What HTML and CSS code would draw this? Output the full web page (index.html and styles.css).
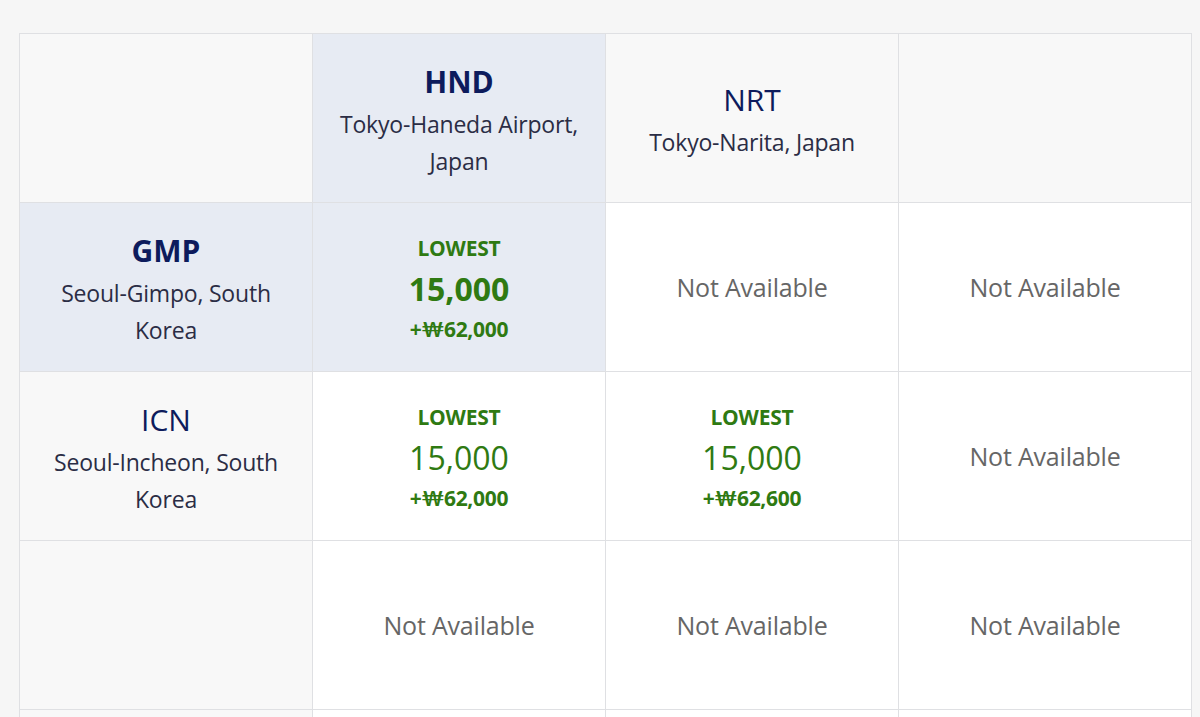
FILE: index.html
```html
<!DOCTYPE html>
<html lang="en">
<head>
<meta charset="utf-8">
<title>Award availability</title>
<link rel="stylesheet" href="styles.css">
</head>
<body>
<div class="page">
  <div class="grid">
    <div class="cell head corner"></div>
    <div class="cell head hl">
      <div class="code bold">HND</div>
      <div class="city">Tokyo-Haneda Airport,<br>Japan</div>
    </div>
    <div class="cell head">
      <div class="code">NRT</div>
      <div class="city">Tokyo-Narita, Japan</div>
    </div>
    <div class="cell head"></div>

    <div class="cell head hl">
      <div class="code bold">GMP</div>
      <div class="city">Seoul-Gimpo, South<br>Korea</div>
    </div>
    <div class="cell price hl">
      <div class="tag">LOWEST</div>
      <div class="miles bold">15,000</div>
      <div class="tax">+₩62,000</div>
    </div>
    <div class="cell"><div class="na">Not Available</div></div>
    <div class="cell"><div class="na">Not Available</div></div>

    <div class="cell head">
      <div class="code">ICN</div>
      <div class="city">Seoul-Incheon, South<br>Korea</div>
    </div>
    <div class="cell price">
      <div class="tag">LOWEST</div>
      <div class="miles">15,000</div>
      <div class="tax">+₩62,000</div>
    </div>
    <div class="cell price">
      <div class="tag">LOWEST</div>
      <div class="miles">15,000</div>
      <div class="tax">+₩62,600</div>
    </div>
    <div class="cell"><div class="na">Not Available</div></div>

    <div class="cell head"></div>
    <div class="cell"><div class="na">Not Available</div></div>
    <div class="cell"><div class="na">Not Available</div></div>
    <div class="cell"><div class="na">Not Available</div></div>

    <div class="cell head"></div>
    <div class="cell"></div>
    <div class="cell"></div>
    <div class="cell"></div>
  </div>
</div>
</body>
</html>
```
FILE: styles.css
```css
html, body {
  margin: 0;
  padding: 0;
  background: #f6f6f6;
  font-family: "Open Sans", Lato, "Liberation Sans", sans-serif;
  overflow: hidden;
  height: 717px;
}

.page {
  padding: 33px 0 0 19px;
}

.grid {
  display: grid;
  grid-template-columns: repeat(4, 293px);
  grid-auto-rows: 169px;
  border-top: 1px solid #dfe0e3;
  border-left: 1px solid #dfe0e3;
  width: max-content;
}

.cell {
  background: #ffffff;
  border-right: 1px solid #dfe0e3;
  border-bottom: 1px solid #dfe0e3;
  display: flex;
  flex-direction: column;
  align-items: center;
  justify-content: center;
  text-align: center;
}

.cell.head {
  background: #f8f8f8;
  padding-top: 7px;
}

.cell.hl {
  background: #e7ebf3;
}

.cell.price {
  padding-top: 4px;
}

.code {
  font-size: 30px;
  line-height: 36px;
  color: #0d1b5c;
  font-weight: 500;
}

.code.bold {
  font-weight: 700;
}

.city {
  font-size: 23px;
  line-height: 37px;
  color: #2b2d45;
  margin-top: 6px;
  letter-spacing: -0.2px;
}

.na {
  font-size: 25px;
  color: #666666;
  letter-spacing: -0.2px;
}

.tag {
  font-size: 21px;
  line-height: 26px;
  font-weight: 700;
  color: #2f7a12;
  letter-spacing: -0.2px;
}

.miles {
  font-size: 32px;
  line-height: 40px;
  color: #2f7a12;
  margin-top: 8px;
}

.miles.bold {
  font-weight: 700;
}

.tax {
  font-size: 21px;
  line-height: 28px;
  font-weight: 700;
  color: #2f7a12;
  margin-top: 6px;
  letter-spacing: -0.3px;
}
```
